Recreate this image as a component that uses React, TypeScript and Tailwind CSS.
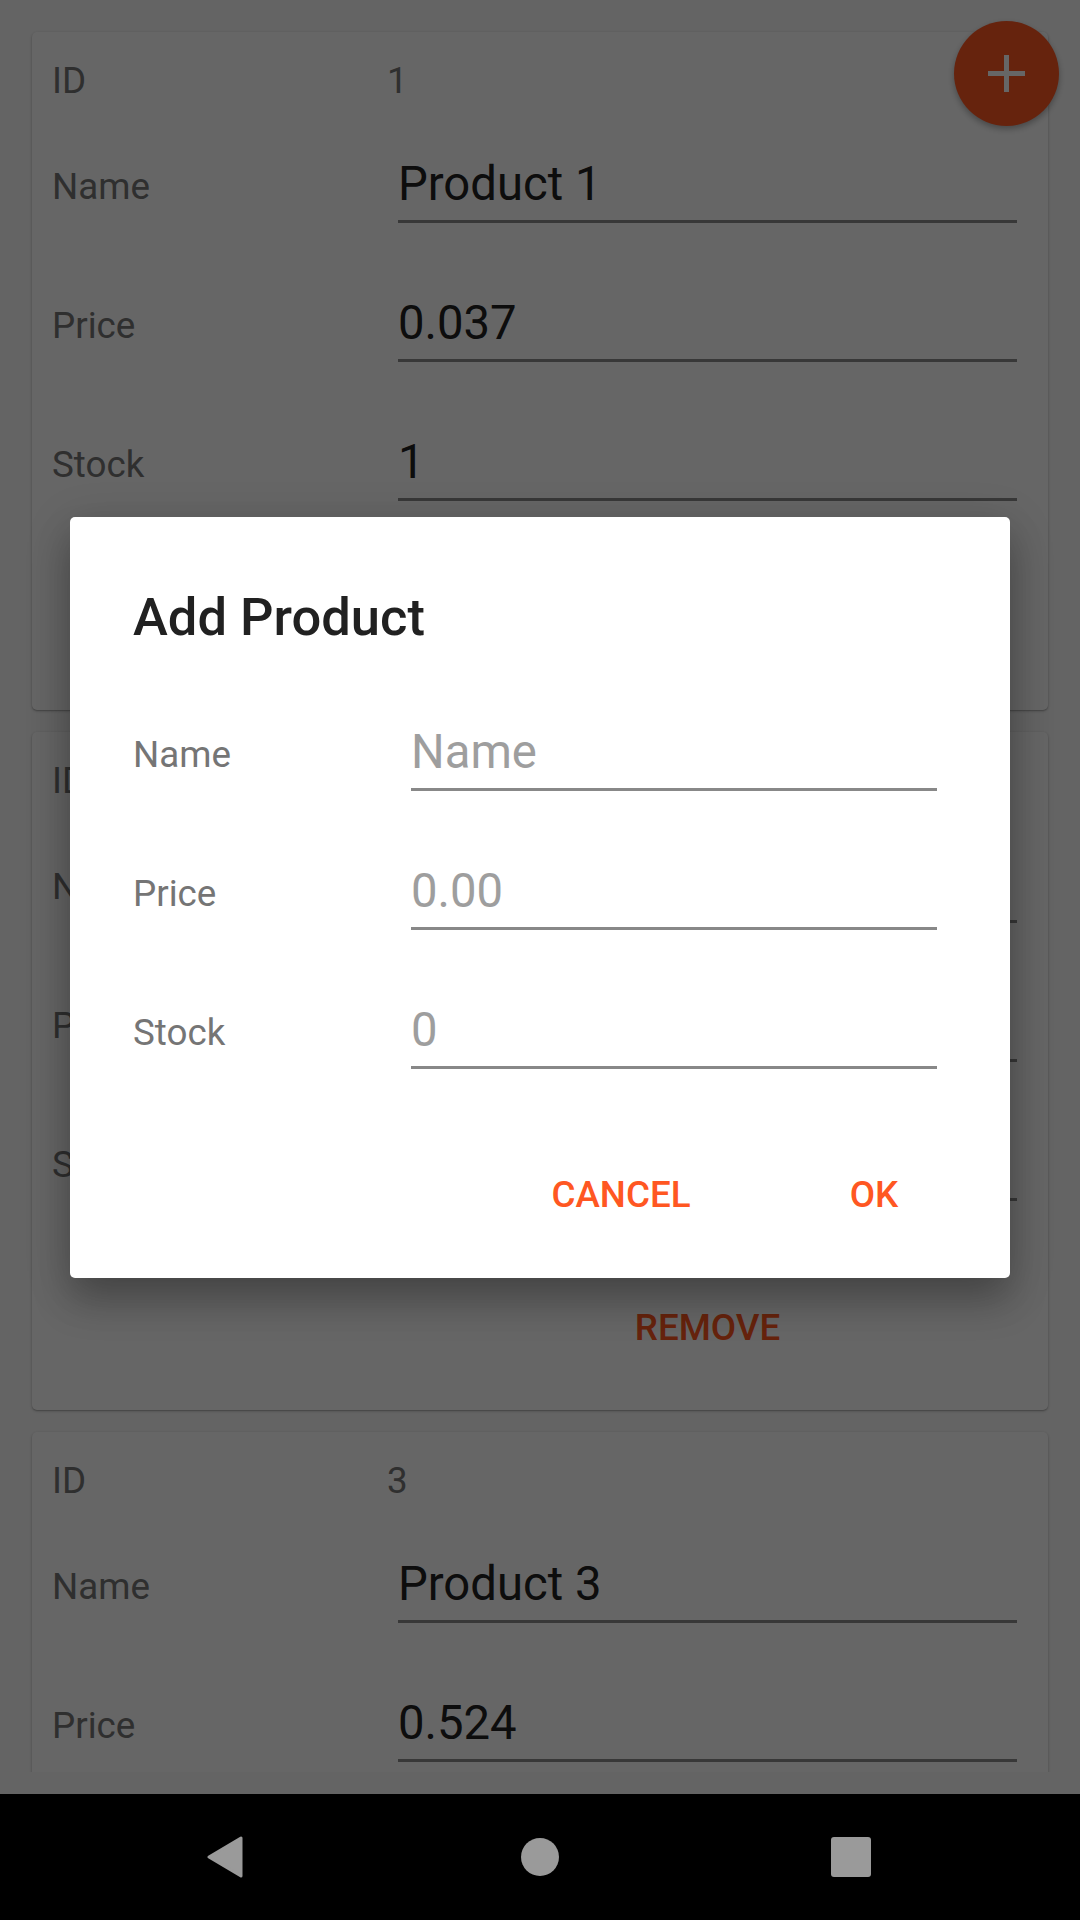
import React from "react";

type Product = { id: number; name: string; price: string; stock: string };

const products: Product[] = [
  { id: 1, name: "Product 1", price: "0.037", stock: "1" },
  { id: 2, name: "Product 2", price: "0.418", stock: "2" },
  { id: 3, name: "Product 3", price: "0.524", stock: "3" },
];

function CardField({ label, value }: { label: string; value: string }) {
  return (
    <div className="flex">
      <div className="w-[346px] pt-[8px] text-[36.75px] leading-[43px] text-[#757575]">{label}</div>
      <div className="w-[619px]">
        <div className="text-[47.25px] leading-[55px] text-[#212121]">{value}</div>
        <div className="mt-[8px] h-[3px] bg-[#8c8c8c]" />
      </div>
    </div>
  );
}

function ProductCard({ p }: { p: Product }) {
  return (
    <div className="h-[678px] shrink-0 rounded-[5px] bg-white pl-[20px] pr-[31px] pt-[27px] shadow-[0_1px_3px_rgba(0,0,0,0.25),0_1px_1px_rgba(0,0,0,0.14)]">
      <div className="flex h-[43px] text-[36.75px] leading-[43px] text-[#757575]">
        <div className="w-[335px]">ID</div>
        <div>{p.id}</div>
      </div>
      <div className="mt-[55px] flex flex-col gap-[73px]">
        <CardField label="Name" value={p.name} />
        <CardField label="Price" value={p.price} />
        <CardField label="Stock" value={p.stock} />
      </div>
      <div className="mt-[105px] flex">
        <div className="w-[346px]" />
        <div className="w-[619px] text-center text-[36.75px] font-medium leading-[43px] text-[#ff5722]">REMOVE</div>
      </div>
    </div>
  );
}

function DialogField({ label, placeholder }: { label: string; placeholder: string }) {
  return (
    <div className="flex">
      <div className="w-[278px] pt-[8px] text-[36.75px] leading-[43px] text-[#757575]">{label}</div>
      <div className="w-[526px]">
        <div className="text-[47.25px] leading-[55px] text-[#9e9e9e]">{placeholder}</div>
        <div className="mt-[8px] h-[3px] bg-[#888888]" />
      </div>
    </div>
  );
}

export default function App() {
  return (
    <div className="flex h-[1920px] w-[1080px] flex-col overflow-hidden bg-black font-['Roboto','Noto_Sans',sans-serif]">
      <div className="relative h-[1794px] shrink-0 overflow-hidden bg-[#fafafa]">
        <div className="flex h-[1772px] flex-col gap-[22px] overflow-hidden px-[32px] pt-[32px]">
          {products.map((p) => (
            <ProductCard key={p.id} p={p} />
          ))}
        </div>

        <div className="absolute left-[954px] top-[21px] flex h-[105px] w-[105px] items-center justify-center rounded-full bg-[#ff5722] shadow-[0_3px_6px_rgba(0,0,0,0.3)]">
          <svg width="37" height="37" viewBox="0 0 37 37">
            <rect x="16" y="0" width="5" height="37" fill="#ffffff" />
            <rect x="0" y="16" width="37" height="5" fill="#ffffff" />
          </svg>
        </div>

        <div className="absolute inset-0 flex items-center justify-center bg-[rgba(0,0,0,0.6)]">
          <div className="h-[761px] w-[940px] rounded-[5px] bg-white pl-[63px] pt-[70px] shadow-[0_24px_38px_rgba(0,0,0,0.22),0_9px_46px_rgba(0,0,0,0.18)]">
            <div className="text-[52.5px] font-medium leading-[61.5px] text-[#212121]">Add Product</div>
            <div className="mt-[76.5px] flex flex-col gap-[73px]">
              <DialogField label="Name" placeholder="Name" />
              <DialogField label="Price" placeholder="0.00" />
              <DialogField label="Stock" placeholder="0" />
            </div>
            <div className="mt-[104.6px] flex justify-end gap-[79px] pr-[52px]">
              <div className="w-[180px] text-center text-[36.75px] font-medium leading-[43px] text-[#ff5722]">CANCEL</div>
              <div className="w-[168px] text-center text-[36.75px] font-medium leading-[43px] text-[#ff5722]">OK</div>
            </div>
          </div>
        </div>
      </div>

      <div className="flex h-[126px] shrink-0 items-center bg-black pl-[207px]">
        <svg width="36" height="42" viewBox="0 0 36 42">
          <path d="M34 2 L34 40 L2 21 Z" fill="#9a9a9a" stroke="#9a9a9a" strokeWidth="3" strokeLinejoin="round" />
        </svg>
        <div className="ml-[278px] h-[38px] w-[38px] rounded-full bg-[#9a9a9a]" />
        <div className="ml-[272px] h-[40px] w-[40px] rounded-[3px] bg-[#9a9a9a]" />
      </div>
    </div>
  );
}
